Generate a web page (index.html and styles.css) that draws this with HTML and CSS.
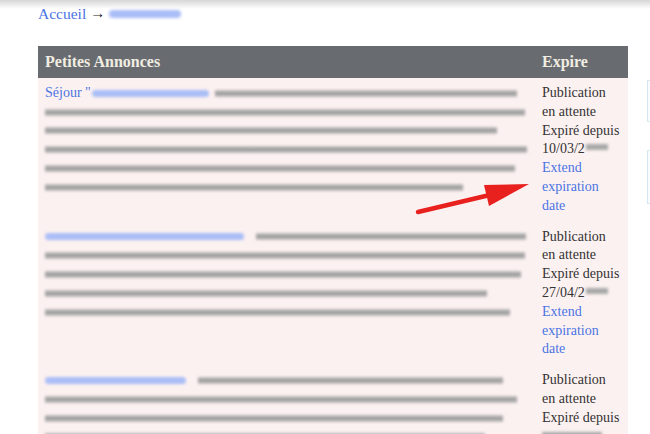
FILE: index.html
```html
<!DOCTYPE html>
<html lang="fr">
<head>
<meta charset="utf-8">
<title>Petites Annonces</title>
<link rel="stylesheet" href="styles.css">
</head>
<body>
<div class="topshade"></div>
<div class="page">
  <div class="main">
    <div class="crumbs"><a href="#" class="link">Accueil</a> <span class="sep">&rarr;</span> <span class="blob blob-crumb"></span></div>
    <table class="ads">
      <colgroup><col class="c-main"><col class="c-exp"></colgroup>
      <thead>
        <tr><th>Petites Annonces</th><th class="th-exp">Expire</th></tr>
      </thead>
      <tbody>
        <tr>
          <td>
            <div class="ln"><a href="#" class="link">Séjour "</a><span class="blob" style="width:117px"></span><span class="bar" style="width:302px"></span></div>
            <div class="ln"><span class="bar" style="width:480px"></span></div>
            <div class="ln"><span class="bar" style="width:452px"></span></div>
            <div class="ln"><span class="bar" style="width:484px"></span></div>
            <div class="ln"><span class="bar" style="width:470px"></span></div>
            <div class="ln"><span class="bar" style="width:418px"></span></div>
          </td>
          <td class="exp">Publication<br>en attente<br>Expiré depuis<br>10/03/2<span class="dim"></span><br><a href="#" class="link">Extend<br>expiration<br>date</a></td>
        </tr>
        <tr>
          <td>
            <div class="ln"><span class="blob" style="width:199px"></span><span class="bar bar-gap" style="width:270px"></span></div>
            <div class="ln"><span class="bar" style="width:480px"></span></div>
            <div class="ln"><span class="bar" style="width:476px"></span></div>
            <div class="ln"><span class="bar" style="width:442px"></span></div>
            <div class="ln"><span class="bar" style="width:465px"></span></div>
          </td>
          <td class="exp">Publication<br>en attente<br>Expiré depuis<br>27/04/2<span class="dim"></span><br><a href="#" class="link">Extend<br>expiration<br>date</a></td>
        </tr>
        <tr>
          <td>
            <div class="ln"><span class="blob" style="width:141px"></span><span class="bar bar-gap" style="width:305px"></span></div>
            <div class="ln"><span class="bar" style="width:472px"></span></div>
            <div class="ln"><span class="bar" style="width:458px"></span></div>
            <div class="ln"><span class="bar" style="width:440px"></span></div>
          </td>
          <td class="exp">Publication<br>en attente<br>Expiré depuis<br><span class="dim dim-wide"></span><br><a href="#" class="link">Extend<br>expiration<br>date</a></td>
        </tr>
      </tbody>
    </table>
  </div>
  <div class="side">
    <div class="sbox sbox-a"></div>
    <div class="sbox sbox-b"></div>
  </div>
</div>
<svg class="arrow" width="650" height="434" viewBox="0 0 650 434" aria-hidden="true">
  <line x1="418" y1="212" x2="494" y2="194" stroke="#e8201e" stroke-width="4.5" stroke-linecap="round"/>
  <polygon points="529,184 484,185 489,206" fill="#e8201e"/>
</svg>
</body>
</html>
```
FILE: styles.css
```css
html, body {
  margin: 0;
  padding: 0;
  background: #ffffff;
}
body {
  font-family: "Liberation Serif", "Times New Roman", serif;
  color: #333333;
  width: 650px;
  height: 434px;
  overflow: hidden;
  position: relative;
}
.topshade {
  position: absolute;
  left: 0;
  top: 0;
  width: 650px;
  height: 9px;
  background: linear-gradient(#d6d6d6, rgba(255,255,255,0));
  pointer-events: none;
}
.page {
  display: flex;
  padding-left: 38px;
}
.main {
  width: 590px;
}
.link {
  color: #4b74e3;
  text-decoration: none;
}
.crumbs {
  padding-top: 4px;
  font-size: 15.5px;
  line-height: 19px;
  height: 19px;
  display: flex;
  align-items: center;
  gap: 4px;
}
.sep {
  color: #222;
  font-size: 15px;
}
.blob {
  display: inline-block;
  height: 7px;
  background: #a9bdf6;
  border-radius: 4px;
  filter: blur(1.8px);
}
.blob-crumb {
  width: 72px;
  height: 8px;
}
.ads {
  margin-top: 23px;
  width: 590px;
  border-collapse: collapse;
  table-layout: fixed;
}
.c-main { width: 496px; }
.c-exp { width: 94px; }
.ads th {
  background: #686c70;
  color: #f1ede2;
  font-weight: bold;
  font-size: 16px;
  height: 32px;
  padding: 0 7px;
  text-align: left;
  vertical-align: middle;
}
.ads th.th-exp {
  padding-left: 8px;
}
.ads td {
  background: #fcf1f1;
  vertical-align: top;
  padding: 6px 7px 6px 7px;
  font-size: 14px;
  line-height: 18.8px;
}
.ads td.exp {
  padding-left: 8px;
  padding-right: 2px;
  white-space: nowrap;
}
.ln {
  height: 18.8px;
  display: flex;
  align-items: center;
  white-space: nowrap;
}
.ln .link {
  margin-right: 1px;
}
.bar {
  display: inline-block;
  height: 7px;
  background: linear-gradient(#c2c2c2, #858585 50%, #c2c2c2);
  filter: blur(1.6px);
  opacity: 0.85;
}
.ln .blob + .bar {
  margin-left: 6px;
}
.ln .blob + .bar-gap {
  margin-left: 12px;
}
.dim {
  display: inline-block;
  width: 22px;
  height: 6px;
  margin-left: 1px;
  background: #a8a8a8;
  filter: blur(1.6px);
  vertical-align: 3px;
}
.dim-wide {
  width: 60px;
  margin-left: 0;
}
.side {
  margin-left: 19px;
  display: flex;
  flex-direction: column;
}
.sbox {
  width: 20px;
  border: 1px solid #d6e7f1;
  background: #f7fbfd;
}
.sbox-a {
  margin-top: 80px;
  height: 40px;
}
.sbox-b {
  margin-top: 28px;
  height: 52px;
}
.arrow {
  position: absolute;
  left: 0;
  top: 0;
  pointer-events: none;
}
```
